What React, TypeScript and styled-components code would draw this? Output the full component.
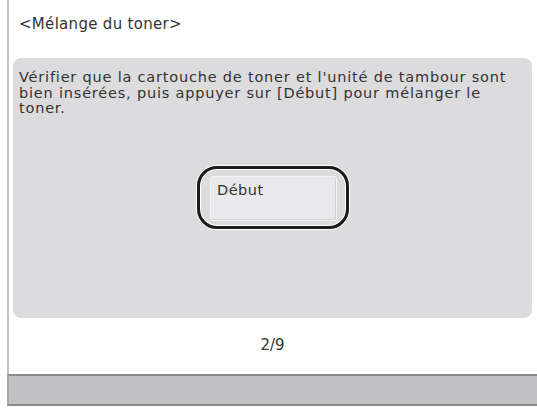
import React from 'react';
import styled, { createGlobalStyle } from 'styled-components';

const GlobalStyle = createGlobalStyle`
  html, body {
    margin: 0;
    padding: 0;
    background: #ffffff;
  }
  body {
    font-family: "DejaVu Sans", "Liberation Sans", sans-serif;
    color: #333333;
  }
`;

const Page = styled.div`
  width: 537px;
  height: 409px;
  padding-left: 7px;
  box-sizing: border-box;
  display: flex;
  flex-direction: column;
  overflow: hidden;
`;

const Screen = styled.div`
  flex: 0 0 374px;
  border-left: 2px solid #c4c4c4;
  display: flex;
  flex-direction: column;
  padding: 0 5px 0 4px;
  box-sizing: border-box;
`;

const Title = styled.div`
  font-size: 15px;
  line-height: 18px;
  padding: 15px 0 0 6px;
  height: 58px;
  box-sizing: border-box;
  letter-spacing: 0.3px;
`;

const Panel = styled.div`
  height: 260px;
  background: #dcdbdd;
  border-radius: 8px;
  padding: 12px 6px;
  box-sizing: border-box;
  display: flex;
  flex-direction: column;
`;

const Message = styled.p`
  margin: 0;
  font-size: 14.5px;
  line-height: 15.5px;
  letter-spacing: 0.8px;
  white-space: nowrap;
`;

const ButtonRow = styled.div`
  display: flex;
  justify-content: center;
  margin-top: 49px;
  padding-left: 1px;
`;

const Ring = styled.div`
  border: 3px solid #1a1a1a;
  border-radius: 20px;
  padding: 7px 9px 5px 10px;
  box-shadow: 0 0 0 1px #ffffff, inset 0 0 0 1px #ffffff;
`;

const Button = styled.button`
  width: 127px;
  height: 45px;
  background: #e9e8ea;
  border: 1px solid #f4f4f4;
  border-radius: 3px;
  box-shadow: inset -1px -1px 0 #d2d1d3;
  font-family: "DejaVu Sans", "Liberation Sans", sans-serif;
  font-size: 14.5px;
  letter-spacing: 0.5px;
  color: #333333;
  text-align: left;
  padding: 5px 0 0 6px;
  display: flex;
  align-items: flex-start;
`;

const Footer = styled.div`
  flex: 1;
  display: flex;
  align-items: center;
  justify-content: center;
  font-size: 15px;
  padding-bottom: 2px;
`;

const Bar = styled.div`
  height: 32px;
  border-top: 2px solid #8a8a8c;
  border-bottom: 2px solid #8a8a8c;
  border-left: 2px solid #a8a8a8;
  background: #c2c1c3;
  box-sizing: border-box;
`;

export default function App() {
  return (
    <>
      <GlobalStyle />
      <Page>
        <Screen>
          <Title>&lt;Mélange du toner&gt;</Title>
          <Panel>
            <Message>
              Vérifier que la cartouche de toner et l'unité de tambour sont
              <br />
              bien insérées, puis appuyer sur [Début] pour mélanger le
              <br />
              toner.
            </Message>
            <ButtonRow>
              <Ring>
                <Button>Début</Button>
              </Ring>
            </ButtonRow>
          </Panel>
          <Footer>2/9</Footer>
        </Screen>
        <Bar />
      </Page>
    </>
  );
}
